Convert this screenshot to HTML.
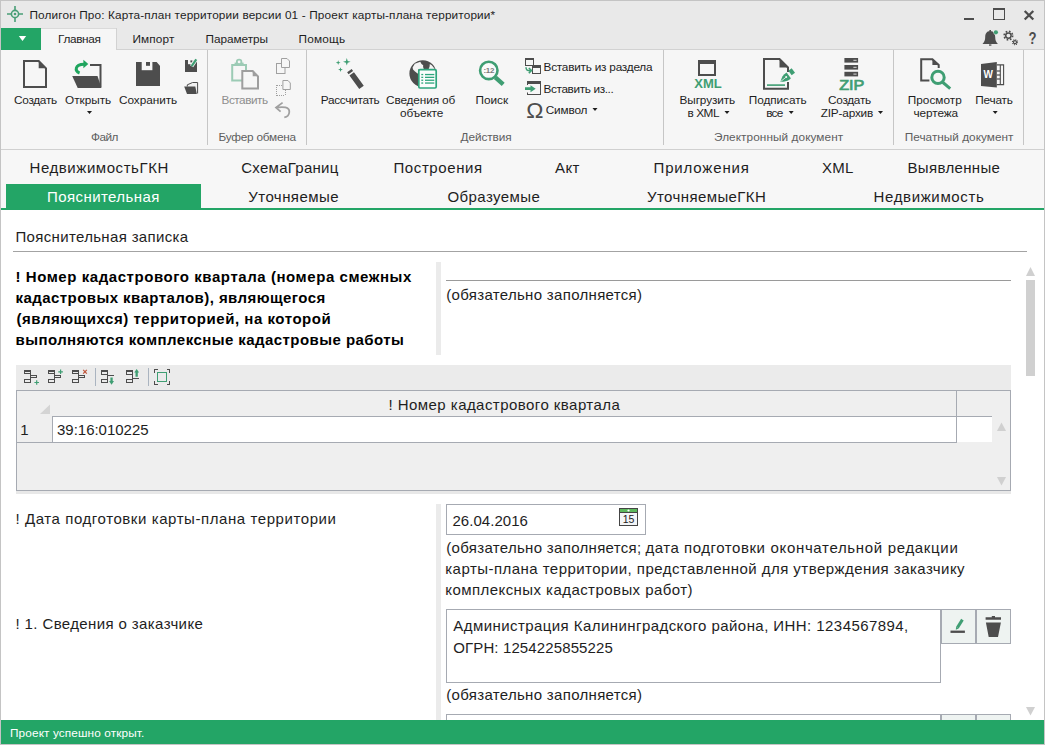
<!DOCTYPE html>
<html lang="ru"><head><meta charset="utf-8"><title>Полигон Про: Карта-план территории</title>
<style>
html,body{margin:0;padding:0;}
body{width:1045px;height:745px;overflow:hidden;background:#fff;position:relative;font-family:"Liberation Sans",sans-serif;}
#g{position:absolute;left:0;top:0;}
.t{position:absolute;white-space:pre;line-height:20px;height:20px;}
svg text{font-family:"Liberation Sans",sans-serif;}
</style></head><body>
<svg id="g" width="1045" height="745" viewBox="0 0 1045 745">
<g shape-rendering="crispEdges">
<!-- title bar -->
<rect x="0" y="0" width="1045" height="50" fill="#e9e9e9"/>
<!-- ribbon -->
<rect x="0" y="50" width="1045" height="99" fill="#f6f6f6"/>
<rect x="116" y="49" width="929" height="1" fill="#d2d2d2"/>
<rect x="0" y="149" width="1045" height="1" fill="#d0d0d0"/>
<!-- active ribbon tab -->
<rect x="41" y="28" width="76" height="22" fill="#f6f6f6"/>
<rect x="41" y="28" width="76" height="1" fill="#dadada"/>
<rect x="116" y="28" width="1" height="22" fill="#d2d2d2"/>
<!-- app button -->
<rect x="1" y="28" width="40" height="22" fill="#23a566"/>
<path d="M18.8 36 L26.2 36 L22.5 41 Z" fill="#fff" shape-rendering="auto"/>
<!-- ribbon separators -->
<rect x="207" y="50" width="1" height="95" fill="#c6c6c6"/>
<rect x="306" y="50" width="1" height="95" fill="#c6c6c6"/>
<rect x="663" y="50" width="1" height="95" fill="#c6c6c6"/>
<rect x="893" y="50" width="1" height="95" fill="#c6c6c6"/>
<rect x="1023" y="50" width="1" height="95" fill="#c6c6c6"/>
<!-- doc tabs area -->
<rect x="0" y="150" width="1045" height="58" fill="#f7f7f7"/>
<rect x="6" y="184" width="195" height="24" fill="#23a566"/>
<rect x="1" y="208" width="1043" height="2" fill="#23a566"/>
<!-- content -->
<rect x="13" y="251" width="1014" height="1" fill="#a3a3a3"/>
<rect x="436" y="262" width="5" height="93" fill="#ebebeb"/>
<rect x="446" y="280" width="565" height="1" fill="#9a9a9a"/>
<!-- main scrollbar -->
<rect x="1026" y="280" width="9" height="96" fill="#d0d0d0"/>
<path d="M1026 276 L1035 276 L1030.5 267 Z" fill="#d0d0d0" shape-rendering="auto"/>
<path d="M1026 707 L1035 707 L1030.5 715.5 Z" fill="#d0d0d0" shape-rendering="auto"/>
<!-- grid toolbar -->
<rect x="16" y="365" width="995" height="26" fill="#ebebeb"/>
<!-- grid -->
<rect x="16" y="390" width="995" height="104" fill="#e8e8e8"/>
<rect x="16" y="390" width="995" height="101" fill="#a6aab2"/>
<rect x="17" y="391" width="993" height="99" fill="#efefef"/>
<rect x="53" y="417" width="939" height="25" fill="#fff"/>
<rect x="52" y="416" width="940" height="1" fill="#a6aab2"/>
<rect x="52" y="416" width="1" height="27" fill="#a6aab2"/>
<rect x="956" y="391" width="1" height="52" fill="#a6aab2"/>
<rect x="17" y="442" width="940" height="1" fill="#a6aab2"/>
<path d="M50 404.5 L50 414 L40 414 Z" fill="#d4d4d4" shape-rendering="auto"/>
<path d="M997 431 L1006 431 L1001.5 422.5 Z" fill="#d0d0d0" shape-rendering="auto"/>
<path d="M997 477 L1006 477 L1001.5 485.5 Z" fill="#d0d0d0" shape-rendering="auto"/>
<!-- lower splitter -->
<rect x="436" y="504" width="5" height="216" fill="#ebebeb"/>
<!-- date box -->
<rect x="446" y="504" width="200" height="31" fill="#a6aab2"/>
<rect x="447" y="505" width="198" height="29" fill="#fff"/>
<!-- textbox 1 -->
<rect x="446" y="609" width="495" height="74" fill="#a6aab2"/>
<rect x="447" y="610" width="493" height="72" fill="#fff"/>
<rect x="941" y="609" width="35" height="35" fill="#a6aab2"/>
<rect x="942" y="610" width="33" height="33" fill="#eef3f1"/>
<rect x="976" y="609" width="35" height="35" fill="#a6aab2"/>
<rect x="977" y="610" width="33" height="33" fill="#eef3f1"/>
<!-- textbox 2 (cut) -->
<rect x="446" y="714" width="495" height="10" fill="#a6aab2"/>
<rect x="447" y="715" width="493" height="10" fill="#fff"/>
<rect x="941" y="714" width="35" height="10" fill="#a6aab2"/>
<rect x="942" y="715" width="33" height="10" fill="#eef3f1"/>
<rect x="976" y="714" width="35" height="10" fill="#a6aab2"/>
<rect x="977" y="715" width="33" height="10" fill="#eef3f1"/>
<!-- status bar -->
<rect x="1" y="720" width="1043" height="24" fill="#23a566"/>
<!-- window border -->
<rect x="0" y="0" width="1045" height="1" fill="#c4c4c4"/>
<rect x="0" y="744" width="1045" height="1" fill="#c4c4c4"/>
<rect x="0" y="0" width="1" height="745" fill="#c4c4c4"/>
<rect x="1044" y="0" width="1" height="745" fill="#c4c4c4"/>
</g>
<!-- title icon -->
<g stroke="#4a9e77" stroke-width="1.6" fill="none"><circle cx="15" cy="14" r="3.6"/><path d="M7 14h4.4M18.6 14H23M15 6v4.4M15 17.6V22"/></g>
<circle cx="15" cy="14" r="1.3" fill="#4a9e77"/>
<!-- window buttons -->
<g fill="#4d4d4d" shape-rendering="crispEdges"><rect x="964" y="18" width="10" height="2"/><rect x="993" y="8" width="12" height="2"/><rect x="993" y="8" width="1" height="12"/><rect x="1004" y="8" width="1" height="12"/><rect x="993" y="19" width="12" height="1"/></g>
<path d="M1024.7 11 L1033.3 19.5 M1033.3 11 L1024.7 19.5" stroke="#4d4d4d" stroke-width="2.3" fill="none"/>
<!-- bell -->
<path d="M990.2 31 C986.6 31 985.2 34 985.2 37 C985.2 40.5 984.3 42 982.5 43.9 L997.9 43.9 C996.1 42 995.2 40.5 995.2 37 C995.2 34 993.8 31 990.2 31 Z" fill="#4d4d4d"/>
<rect x="989" y="44.4" width="2.4" height="1.3" fill="#4d4d4d"/><rect x="989.4" y="30" width="1.6" height="1.5" fill="#4d4d4d"/>
<circle cx="995.9" cy="32.3" r="2.5" fill="#e9e9e9"/><circle cx="995.9" cy="32.3" r="2.1" fill="#3f9e73"/>
<!-- gears -->
<g fill="none" stroke="#4d4d4d"><circle cx="1008.4" cy="35.6" r="2.7" stroke-width="1.5"/><circle cx="1008.4" cy="35.6" r="4.2" stroke-width="1.7" stroke-dasharray="1.65 1.65"/><circle cx="1015" cy="42.2" r="1.5" stroke-width="1.2"/><circle cx="1015" cy="42.2" r="2.5" stroke-width="1.1" stroke-dasharray="0.98 0.98"/></g>
<text x="1028.4" y="43.9" font-size="16" font-weight="700" fill="#4d4d4d" textLength="8" lengthAdjust="spacingAndGlyphs">?</text>
<!-- dropdown arrows -->
<g fill="#1e1e1e"><path d="M87 111h5l-2.5 3z"/><path d="M592.5 108h5l-2.5 3z"/><path d="M724.5 111h5l-2.5 3z"/><path d="M788.7 111h5l-2.5 3z"/><path d="M878 111h5l-2.5 3z"/><path d="M992.7 111h5l-2.5 3z"/></g>
<!-- new -->
<path d="M24 61 H38.7 L46 68.3 V87 H24 Z" fill="none" stroke="#4d4d4d" stroke-width="2"/><path d="M38.7 61 V68.3 H46 Z" fill="#4d4d4d"/>
<!-- open -->
<path d="M90 65 H100.5 V87" fill="none" stroke="#4d4d4d" stroke-width="2"/>
<path d="M72.2 76 H97.5 L101.5 88 H77.7 Z" fill="#4d4d4d"/>
<path d="M79.6 73 C74.6 71 74.6 64.4 84 64.2" fill="none" stroke="#1fa55e" stroke-width="3"/><path d="M83.4 59.8 L88.3 63.9 L83.4 68.2 Z" fill="#1fa55e"/>
<!-- save -->
<path d="M136 62 H156.6 L160 65.8 V86 H136 Z" fill="#4d4d4d"/><rect x="141.7" y="61.5" width="10.7" height="8.7" fill="#f6f6f6"/><rect x="146" y="62" width="4" height="3.8" fill="#4d4d4d"/>
<!-- save as small -->
<rect x="185" y="60" width="12" height="12" fill="#4d4d4d"/><rect x="188" y="59.5" width="5.6" height="4.7" fill="#f6f6f6"/><rect x="190.4" y="60.4" width="2" height="2" fill="#4d4d4d"/>
<path d="M196.3 59.3 L191.6 66.2" stroke="#f6f6f6" stroke-width="3.8"/><path d="M196.3 59.3 L191.6 66.2" stroke="#3f9e73" stroke-width="2.2"/>
<!-- open small -->
<path d="M187.3 86.5 V84.8 L192.6 82.5 H197.6 V93.5" fill="#f0f0f0" stroke="#4d4d4d" stroke-width="1"/>
<path d="M184.2 86.5 H195.3 L196.8 94 H187 Z" fill="#4d4d4d"/>
<!-- paste (disabled) -->
<rect x="232.2" y="65" width="13.8" height="15.5" fill="none" stroke="#9ccbb5" stroke-width="2"/><rect x="234.6" y="62.6" width="9" height="3" fill="#9ccbb5"/>
<circle cx="239.1" cy="61.9" r="2.3" fill="#f6f6f6" stroke="#9ccbb5" stroke-width="1.8"/>
<path d="M242.3 71 H252.7 L258 76.3 V88.5 H242.3 Z" fill="#f6f6f6" stroke="#9e9e9e" stroke-width="2"/><path d="M252.7 71 V76.3 H258 Z" fill="#9e9e9e"/>
<!-- copy / cut / undo (disabled) -->
<g fill="none" stroke="#a0a0a0" stroke-width="1"><rect x="276.5" y="63.5" width="8.5" height="10"/><path d="M281.5 58.5 H287 L289.5 61 V67.5 H281.5 Z" fill="#f6f6f6"/>
<path d="M276.5 85 V96 M285.5 90 V96 M277 95.5 H285 M277 85.5 H282" stroke-dasharray="1 1" shape-rendering="crispEdges"/><path d="M282.9 80.5 H288 L290.3 83 V89.5 H282.9 Z" fill="#f6f6f6"/>
<path d="M276.3 107.6 C283 106.4 289.6 107 289.3 112 C289.1 115 287 117 284.3 117.4 M282.6 102.6 L276 107.6 L280.6 111.6" stroke-width="1.8"/></g>
<!-- wand -->
<path d="M349.4 70.7 L350.8 72.6 M351.7 73.9 L361.5 87.4" stroke="#4d4d4d" stroke-width="5.6" fill="none"/>
<g fill="#3f9e73"><path d="M346.8 58 l0.9 2.9 2.9 0.9 -2.9 0.9 -0.9 2.9 -0.9 -2.9 -2.9 -0.9 2.9 -0.9z"/><path d="M338.2 60.3 l0.6 1.8 1.8 0.6 -1.8 0.6 -0.6 1.8 -0.6 -1.8 -1.8 -0.6 1.8 -0.6z"/><path d="M340.5 67.2 l0.6 1.8 1.8 0.6 -1.8 0.6 -0.6 1.8 -0.6 -1.8 -1.8 -0.6 1.8 -0.6z"/></g>
<!-- globe + list -->
<circle cx="422.8" cy="73.6" r="13.4" fill="#4d4d4d"/>
<path d="M412.6 67.6 L414.8 63.8 L420.3 61.8 L421.5 64 L423.2 65.3 L423.1 67 L424 69.5 H418 V73.8 L415 71.5 L413 69.5 Z M429.8 64 L431.8 65.2 L434.4 68.5 L434.6 69.6 H428.5 L429.6 66.5 Z" fill="#f4f4f4"/>
<rect x="418.8" y="69.7" width="17.4" height="18.3" rx="1.2" fill="#fbfdfc" stroke="#2ea67d" stroke-width="1.7"/>
<g fill="#2ea67d"><rect x="421.3" y="73.9" width="1.9" height="1.3"/><rect x="425" y="73.9" width="9.3" height="1.3"/><rect x="421.3" y="76.7" width="1.9" height="1.3"/><rect x="425" y="76.7" width="9.3" height="1.3"/><rect x="421.3" y="79.6" width="1.9" height="1.3"/><rect x="425" y="79.6" width="9.3" height="1.3"/><rect x="421.3" y="82.4" width="1.9" height="1.3"/><rect x="425" y="82.4" width="9.3" height="1.3"/></g>
<!-- search -->
<circle cx="488.8" cy="70.4" r="8.7" fill="#fafafa" stroke="#3f9e73" stroke-width="2.6"/><path d="M495.3 77.4 L503.2 84.4" stroke="#3f9e73" stroke-width="4.4"/>
<text x="488.8" y="73.2" font-size="8" font-weight="700" fill="#7a7a7a" text-anchor="middle" letter-spacing="-0.4">:12</text>
<!-- insert from section -->
<g fill="none" stroke="#4d4d4d" stroke-width="1" shape-rendering="crispEdges"><rect x="525.5" y="58.5" width="8" height="7"/><rect x="532.5" y="65.5" width="8" height="8" fill="#f6f6f6"/></g>
<g fill="#4d4d4d" shape-rendering="crispEdges"><rect x="525" y="58" width="9" height="2"/><rect x="532" y="65" width="9" height="3"/></g>
<rect x="525" y="66.6" width="7" height="7.4" fill="#f6f6f6"/>
<path d="M526 67.2 C526 70.4 527.4 70.7 530.4 70.7 M528.8 68 L531.6 70.6 L528.8 73.1" fill="none" stroke="#3f9e73" stroke-width="1.5"/>
<!-- insert from -->
<g shape-rendering="crispEdges"><rect x="527.5" y="81.5" width="13" height="13" fill="none" stroke="#4d4d4d" stroke-width="1"/><rect x="527" y="81" width="14" height="3" fill="#4d4d4d"/></g>
<rect x="526.5" y="85" width="2.5" height="7.5" fill="#f6f6f6"/><path d="M525 87.3 H530.5 V85.2 L535.7 88.7 L530.5 92.2 V90.1 H525 Z" fill="#3f9e73"/>
<text x="526.2" y="117.6" font-size="21.5" fill="#4d4d4d" textLength="17.2" lengthAdjust="spacingAndGlyphs">Ω</text>
<!-- xml -->
<rect x="699" y="61" width="16" height="14" fill="none" stroke="#4d4d4d" stroke-width="2"/><rect x="698" y="60" width="18" height="4" fill="#4d4d4d"/>
<text x="694.3" y="87.6" font-size="12.4" font-weight="700" fill="#3f9e73" textLength="27.5" lengthAdjust="spacingAndGlyphs">XML</text>
<!-- sign -->
<path d="M788 82 V88.7 H764 V59 H779.5 L788 67.5 V72" fill="none" stroke="#4d4d4d" stroke-width="2"/><path d="M779.5 59 V67.5 H788 Z" fill="#4d4d4d"/>
<rect x="767" y="84.3" width="18" height="1.6" fill="#3f9e73"/>
<path d="M786.6 72.6 L790.9 78.2 C788.8 81.2 784 81.6 780.3 81.9 C781.6 78 783 74.4 786.6 72.6Z" fill="#3f9e73"/><path d="M793.3 70.6 L790 73.1" stroke="#3f9e73" stroke-width="5.6"/>
<path d="M780.6 81.6 L785.8 77.4" stroke="#f6f6f6" stroke-width="0.8"/><circle cx="786.2" cy="77.1" r="1" fill="#f6f6f6"/>
<!-- zip -->
<g fill="#4d4d4d"><rect x="844.4" y="58" width="13.7" height="4.6"/><rect x="844.4" y="65" width="13.7" height="4.6"/><rect x="844.4" y="71.8" width="13.7" height="4.6"/></g>
<g fill="#d8d8d8"><rect x="853.4" y="59.8" width="3.2" height="1"/><rect x="853.4" y="66.8" width="3.2" height="1"/><rect x="853.4" y="73.6" width="3.2" height="1"/></g>
<text x="839.2" y="89.7" font-size="14" fill="#3f9e73" stroke="#3f9e73" stroke-width="0.7" textLength="25.2" lengthAdjust="spacingAndGlyphs">ZIP</text>
<!-- preview -->
<path d="M929.4 80.6 H921.2 V59.3 H932.4 L938.7 65 V68" fill="none" stroke="#4d4d4d" stroke-width="2"/><path d="M932.4 59.3 V65 H938.7Z" fill="#4d4d4d"/>
<circle cx="938" cy="77.4" r="6.2" fill="none" stroke="#3f9e73" stroke-width="3"/><path d="M942.4 82 L950.2 88.6" stroke="#3f9e73" stroke-width="3"/>
<!-- word -->
<path d="M981 64 L996.8 62 V87.6 L981 85.9 Z" fill="#4d4d4d"/>
<text x="983.6" y="77.6" font-size="10.5" font-weight="700" fill="#fff" textLength="9.4" lengthAdjust="spacingAndGlyphs">W</text>
<path d="M996.8 64.9 H1003.6 V84.6 H996.8 M1000.3 65 V84.5" fill="none" stroke="#4d4d4d" stroke-width="1.1"/>
<g fill="#4d4d4d"><rect x="996.8" y="70.4" width="3.5" height="1.2"/><rect x="996.8" y="74.4" width="3.5" height="1.2"/><rect x="996.8" y="78.4" width="3.5" height="1.2"/></g>
<!-- grid toolbar -->
<g shape-rendering="crispEdges"><rect x="95" y="368" width="1" height="18" fill="#aab4c0"/><rect x="148" y="368" width="1" height="18" fill="#aab4c0"/></g>
<g fill="none" stroke="#4d4d4d" stroke-width="1" shape-rendering="crispEdges">
<rect x="24.5" y="370.5" width="6" height="3"/><rect x="30.5" y="375.5" width="6" height="2"/><rect x="24.5" y="379.5" width="6" height="3"/><path d="M30.5 370 V383 M54.5 370 V383 M78.5 370 V383"/>
<rect x="48.5" y="370.5" width="6" height="3"/><rect x="54.5" y="375.5" width="6" height="2"/><rect x="48.5" y="379.5" width="6" height="3"/>
<rect x="72.5" y="370.5" width="6" height="3"/><rect x="78.5" y="375.5" width="6" height="2"/><rect x="72.5" y="379.5" width="6" height="3"/>
<path d="M107.5 370.5 H101.5 V374.5 H107.5 M107.5 379.5 H101.5 V382.5 H107.5 M107.5 370 V383 M107.5 375.5 H114"/>
<path d="M132.5 370.5 H126.5 V374.5 H132.5 M132.5 379.5 H126.5 V382.5 H132.5 M132.5 370 V383 M132.5 378.5 H139"/>
<path d="M154.5 373 V369.5 H158 M166.5 369.5 H169.5 V373 M169.5 381 V384.5 H166.5 M158 384.5 H154.5 V381"/>
</g>
<g fill="#4d4d4d" shape-rendering="crispEdges"><rect x="24" y="370" width="7" height="2"/><rect x="48" y="370" width="7" height="2"/><rect x="72" y="370" width="7" height="2"/><rect x="101" y="370" width="7" height="2"/><rect x="126" y="370" width="7" height="2"/></g>
<path d="M34.4 382.5 H39 M36.7 380.2 V384.8 M58.3 371.8 H62.9 M60.6 369.5 V374.1" stroke="#3f9e73" stroke-width="1.2" fill="none"/>
<path d="M83.2 369.9 L86.8 373.6 M86.8 369.9 L83.2 373.6" stroke="#c0553a" stroke-width="1.2" fill="none"/>
<path d="M110.4 377.5 H112.7 V381 H114 L111.55 384.8 L109.1 381 H110.4 Z M135.5 376.7 H137.8 V372.6 H139.1 L136.65 369 L134.2 372.6 H135.5 Z" fill="#3f9e73"/>
<rect x="157.5" y="372.5" width="9" height="9" fill="none" stroke="#3f9e73" stroke-width="1" shape-rendering="crispEdges"/>
<!-- calendar -->
<g shape-rendering="crispEdges"><rect x="619" y="508" width="19" height="18" fill="#444"/><rect x="620" y="509" width="17" height="3" fill="#5cb85c"/><rect x="620" y="513" width="17" height="12" fill="#f3f5f7"/></g>
<circle cx="628.5" cy="510.5" r="1.1" fill="#fff"/>
<text x="628.6" y="523.4" font-size="10.5" fill="#222" text-anchor="middle">15</text>
<!-- edit / trash -->
<rect x="950.5" y="630.6" width="14.4" height="2.3" fill="#4d4d4d"/><path d="M962.4 619.6 L957.4 627.6" stroke="#3f9e73" stroke-width="3"/><path d="M956.1 626.8 L958.7 628.4 L955.8 629.8 Z" fill="#3f9e73"/>
<path d="M985.6 617.2 H1001 V619.8 H985.6 Z M991.8 616 H995 V617.4 H991.8 Z M985.9 622.6 H1000.9 L998 636.9 H988.7 Z" fill="#4d4d4d"/>

</svg>
<span class="t" style="left:29.50px;top:4.91px;font-size:11.8px;letter-spacing:0.131px;color:#1e1e1e;">Полигон Про: Карта-план территории версии 01 - Проект карты-плана территории*</span>
<span class="t" style="left:58.00px;top:28.91px;font-size:11.8px;letter-spacing:-0.335px;color:#1e1e1e;">Главная</span>
<span class="t" style="left:132.50px;top:28.91px;font-size:11.8px;letter-spacing:0.132px;color:#1e1e1e;">Импорт</span>
<span class="t" style="left:205.50px;top:28.91px;font-size:11.8px;letter-spacing:-0.051px;color:#1e1e1e;">Параметры</span>
<span class="t" style="left:298.50px;top:28.91px;font-size:11.8px;letter-spacing:0.217px;color:#1e1e1e;">Помощь</span>
<span class="t" style="left:14.00px;top:89.91px;font-size:11.8px;letter-spacing:-0.281px;color:#1e1e1e;">Создать</span>
<span class="t" style="left:65.00px;top:89.91px;font-size:11.8px;letter-spacing:-0.031px;color:#1e1e1e;">Открыть</span>
<span class="t" style="left:119.00px;top:89.91px;font-size:11.8px;letter-spacing:-0.059px;color:#1e1e1e;">Сохранить</span>
<span class="t" style="left:221.50px;top:89.91px;font-size:11.8px;letter-spacing:-0.480px;color:#8e8e8e;">Вставить</span>
<span class="t" style="left:320.75px;top:89.91px;font-size:11.8px;letter-spacing:-0.296px;color:#1e1e1e;">Рассчитать</span>
<span class="t" style="left:386.00px;top:89.91px;font-size:11.8px;letter-spacing:-0.123px;color:#1e1e1e;">Сведения об</span>
<span class="t" style="left:400.00px;top:102.91px;font-size:11.8px;letter-spacing:-0.112px;color:#1e1e1e;">объекте</span>
<span class="t" style="left:475.50px;top:89.91px;font-size:11.8px;letter-spacing:-0.007px;color:#1e1e1e;">Поиск</span>
<span class="t" style="left:543.50px;top:57.41px;font-size:11.8px;letter-spacing:-0.230px;color:#1e1e1e;">Вставить из раздела</span>
<span class="t" style="left:543.50px;top:78.91px;font-size:11.8px;letter-spacing:-0.372px;color:#1e1e1e;">Вставить из...</span>
<span class="t" style="left:545.75px;top:99.66px;font-size:11.8px;letter-spacing:-0.181px;color:#1e1e1e;">Символ</span>
<span class="t" style="left:679.50px;top:89.91px;font-size:11.8px;letter-spacing:-0.110px;color:#1e1e1e;">Выгрузить</span>
<span class="t" style="left:687.50px;top:102.91px;font-size:11.8px;letter-spacing:-0.435px;color:#1e1e1e;">в XML</span>
<span class="t" style="left:748.75px;top:89.91px;font-size:11.8px;letter-spacing:-0.062px;color:#1e1e1e;">Подписать</span>
<span class="t" style="left:766.25px;top:102.91px;font-size:11.8px;letter-spacing:-0.767px;color:#1e1e1e;">все</span>
<span class="t" style="left:828.00px;top:89.91px;font-size:11.8px;letter-spacing:-0.281px;color:#1e1e1e;">Создать</span>
<span class="t" style="left:820.75px;top:102.91px;font-size:11.8px;letter-spacing:-0.188px;color:#1e1e1e;">ZIP-архив</span>
<span class="t" style="left:907.75px;top:89.91px;font-size:11.8px;letter-spacing:0.027px;color:#1e1e1e;">Просмотр</span>
<span class="t" style="left:913.50px;top:102.91px;font-size:11.8px;letter-spacing:-0.100px;color:#1e1e1e;">чертежа</span>
<span class="t" style="left:975.25px;top:89.91px;font-size:11.8px;letter-spacing:-0.200px;color:#1e1e1e;">Печать</span>
<span class="t" style="left:91.00px;top:127.41px;font-size:11.8px;letter-spacing:-0.540px;color:#5e5e5e;">Файл</span>
<span class="t" style="left:218.50px;top:127.41px;font-size:11.8px;letter-spacing:-0.236px;color:#5e5e5e;">Буфер обмена</span>
<span class="t" style="left:460.50px;top:127.41px;font-size:11.8px;letter-spacing:-0.078px;color:#5e5e5e;">Действия</span>
<span class="t" style="left:714.00px;top:127.41px;font-size:11.8px;letter-spacing:0.070px;color:#5e5e5e;">Электронный документ</span>
<span class="t" style="left:904.75px;top:127.41px;font-size:11.8px;letter-spacing:0.013px;color:#5e5e5e;">Печатный документ</span>
<span class="t" style="left:29.50px;top:158.05px;font-size:15px;letter-spacing:0.567px;color:#1e1e1e;">НедвижимостьГКН</span>
<span class="t" style="left:241.25px;top:158.05px;font-size:15px;letter-spacing:0.271px;color:#1e1e1e;">СхемаГраниц</span>
<span class="t" style="left:393.50px;top:158.05px;font-size:15px;letter-spacing:0.591px;color:#1e1e1e;">Построения</span>
<span class="t" style="left:555.00px;top:158.05px;font-size:15px;letter-spacing:0.382px;color:#1e1e1e;">Акт</span>
<span class="t" style="left:653.50px;top:158.05px;font-size:15px;letter-spacing:0.846px;color:#1e1e1e;">Приложения</span>
<span class="t" style="left:822.00px;top:158.05px;font-size:15px;letter-spacing:0.250px;color:#1e1e1e;">XML</span>
<span class="t" style="left:907.50px;top:158.05px;font-size:15px;letter-spacing:0.336px;color:#1e1e1e;">Выявленные</span>
<span class="t" style="left:47.00px;top:187.30px;font-size:15px;letter-spacing:0.425px;color:#ffffff;">Пояснительная</span>
<span class="t" style="left:248.25px;top:187.30px;font-size:15px;letter-spacing:0.456px;color:#1e1e1e;">Уточняемые</span>
<span class="t" style="left:447.50px;top:187.30px;font-size:15px;letter-spacing:0.417px;color:#1e1e1e;">Образуемые</span>
<span class="t" style="left:647.00px;top:187.30px;font-size:15px;letter-spacing:0.408px;color:#1e1e1e;">УточняемыеГКН</span>
<span class="t" style="left:873.50px;top:187.30px;font-size:15px;letter-spacing:0.647px;color:#1e1e1e;">Недвижимость</span>
<span class="t" style="left:15.50px;top:226.80px;font-size:15px;letter-spacing:0.335px;color:#1e1e1e;">Пояснительная записка</span>
<span class="t" style="left:15.50px;top:266.55px;font-size:15px;letter-spacing:0.561px;color:#000;font-weight:700;">! Номер кадастрового квартала (номера смежных</span>
<span class="t" style="left:15.50px;top:288.05px;font-size:15px;letter-spacing:0.439px;color:#000;font-weight:700;">кадастровых кварталов), являющегося</span>
<span class="t" style="left:16.50px;top:309.30px;font-size:15px;letter-spacing:0.540px;color:#000;font-weight:700;">(являющихся) территорией, на которой</span>
<span class="t" style="left:15.50px;top:330.30px;font-size:15px;letter-spacing:0.442px;color:#000;font-weight:700;">выполняются комплексные кадастровые работы</span>
<span class="t" style="left:446.25px;top:284.80px;font-size:15px;letter-spacing:0.315px;color:#1e1e1e;">(обязательно заполняется)</span>
<span class="t" style="left:388.50px;top:394.80px;font-size:15px;letter-spacing:0.451px;color:#1e1e1e;">! Номер кадастрового квартала</span>
<span class="t" style="left:20.25px;top:420.30px;font-size:15px;letter-spacing:0.000px;color:#1e1e1e;">1</span>
<span class="t" style="left:57.00px;top:420.30px;font-size:15px;letter-spacing:-0.015px;color:#1e1e1e;">39:16:010225</span>
<span class="t" style="left:15.50px;top:509.05px;font-size:15px;letter-spacing:0.573px;color:#1e1e1e;">! Дата подготовки карты-плана территории</span>
<span class="t" style="left:452.50px;top:510.55px;font-size:15px;letter-spacing:0.030px;color:#1e1e1e;">26.04.2016</span>
<span class="t" style="left:446.25px;top:537.80px;font-size:15px;letter-spacing:0.315px;color:#1e1e1e;">(обязательно заполняется;</span>
<span class="t" style="left:645.50px;top:537.80px;font-size:15px;letter-spacing:0.529px;color:#1e1e1e;">дата подготовки</span>
<span class="t" style="left:770.50px;top:537.80px;font-size:15px;letter-spacing:0.672px;color:#1e1e1e;">окончательной редакции</span>
<span class="t" style="left:445.25px;top:559.30px;font-size:15px;letter-spacing:0.462px;color:#1e1e1e;">карты-плана территории, представленной для утверждения заказчику</span>
<span class="t" style="left:445.25px;top:579.80px;font-size:15px;letter-spacing:0.439px;color:#1e1e1e;">комплексных кадастровых работ)</span>
<span class="t" style="left:15.50px;top:614.05px;font-size:15px;letter-spacing:0.383px;color:#1e1e1e;">! 1. Сведения о заказчике</span>
<span class="t" style="left:453.25px;top:616.05px;font-size:15px;letter-spacing:0.436px;color:#1e1e1e;">Администрация Калининградского района, ИНН: 1234567894,</span>
<span class="t" style="left:453.25px;top:637.80px;font-size:15px;letter-spacing:0.121px;color:#1e1e1e;">ОГРН: 1254225855225</span>
<span class="t" style="left:446.25px;top:684.80px;font-size:15px;letter-spacing:0.315px;color:#1e1e1e;">(обязательно заполняется)</span>
<span class="t" style="left:10.00px;top:722.61px;font-size:11.8px;letter-spacing:0.116px;color:#ffffff;">Проект успешно открыт.</span>
</body></html>
